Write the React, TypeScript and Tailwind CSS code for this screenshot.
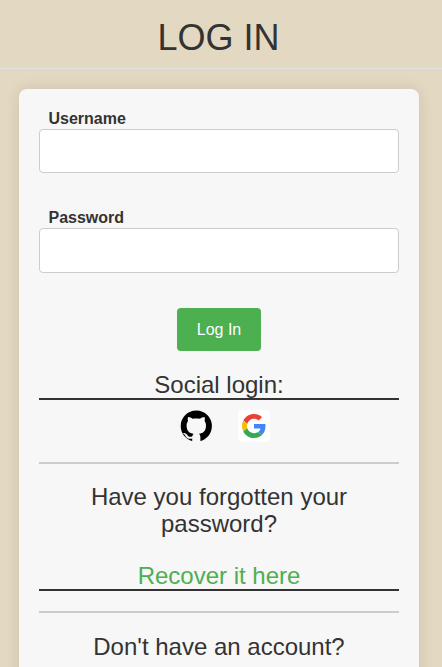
import React from "react";

function Field({ label, type, box }: { label: string; type: string; box: string }) {
  return (
    <label className="block">
      <span className="block h-[20px] pl-[9.5px] text-[16px] font-bold leading-[20px]">{label}</span>
      <input
        type={type}
        className={`block w-full rounded-[4px] border border-[#ccc] bg-white px-3 outline-none ${box}`}
      />
    </label>
  );
}

function GithubMark() {
  return (
    <svg viewBox="0 0 16 16" className="h-[32px] w-[32px]" aria-label="GitHub">
      <circle cx="8.15" cy="8" r="7.8" fill="#000" />
      <path
        fill="#f7f7f7"
        d="M6.1 16v-1.7c-1.6.3-2.6-.1-3.2-1.1-.3-.6-.7-.95-1.2-1.3-.2-.2 0-.4.3-.4.8 0 1.3.5 1.7 1.1.6.9 1.4.95 2.4.65.1-.6.35-1 .7-1.35-2.1-.3-3.5-1.4-3.5-4.2 0-.9.3-1.6.7-2.2-.2-.65-.15-1.35.05-1.95.85 0 1.6.4 2.25.85 1.2-.25 2.5-.25 3.7 0 .65-.45 1.4-.85 2.25-.85.2.6.25 1.3.05 1.95.4.6.7 1.3.7 2.2 0 2.8-1.4 3.9-3.5 4.2.45.4.7 1 .7 1.8V16z"
      />
    </svg>
  );
}

function GoogleMark() {
  return (
    <svg viewBox="0 0 48 48" className="h-[24px] w-[24px]" aria-label="Google">
      <path fill="#EA4335" d="M24 9.5c3.54 0 6.71 1.22 9.21 3.6l6.85-6.85C35.9 2.38 30.47 0 24 0 14.62 0 6.51 5.38 2.56 13.22l7.98 6.19C12.43 13.72 17.74 9.5 24 9.5z" />
      <path fill="#4285F4" d="M46.98 24.55c0-1.57-.15-3.09-.38-4.55H24v9.02h12.94c-.58 2.96-2.26 5.48-4.78 7.18l7.73 6c4.51-4.18 7.09-10.36 7.09-17.65z" />
      <path fill="#FBBC05" d="M10.53 28.59c-.48-1.45-.76-2.99-.76-4.59s.27-3.14.76-4.59l-7.98-6.19C.92 16.46 0 20.12 0 24c0 3.88.92 7.54 2.56 10.78l7.97-6.19z" />
      <path fill="#34A853" d="M24 48c6.48 0 11.93-2.13 15.89-5.81l-7.73-6c-2.15 1.45-4.92 2.3-8.16 2.3-6.26 0-11.57-4.22-13.47-9.91l-7.98 6.19C6.51 42.62 14.62 48 24 48z" />
    </svg>
  );
}

export default function App() {
  return (
    <div className="h-[667px] overflow-hidden bg-[#e3d8c1] font-['Liberation_Sans',Arial,sans-serif] text-[#333]">
      <h1 className="h-[68px] pr-[5px] pt-[18px] text-center text-[36px] leading-[40px]">LOG IN</h1>
      <div className="h-px bg-[#e1e1e3]" />
      <main className="ml-[19px] mt-[20px] h-[700px] w-[400px] rounded-[8px] bg-[#f7f7f7] px-5 pt-5 shadow-[0_0_15px_rgba(0,0,0,0.1)]">
        <form className="flex flex-col">
          <Field label="Username" type="text" box="h-[44px]" />
          <div className="mt-[35px]">
            <Field label="Password" type="password" box="h-[45px]" />
          </div>
          <button
            type="button"
            className="mt-[35px] h-[43px] w-[84px] self-center rounded-[4px] bg-[#4caf50] text-[16px] text-white"
          >
            Log In
          </button>
        </form>
        <h2 className="mt-[21px] h-[28px] border-b-2 border-[#333] text-center text-[24px] leading-[26px]">
          Social login:
        </h2>
        <div className="mt-[10px] flex h-[32px] justify-center gap-[14px]">
          <a className="flex w-[55px] justify-center bg-[repeating-conic-gradient(#f3f3f3_0_25%,#fafafa_0_50%)] bg-[length:2px_2px]">
            <GithubMark />
          </a>
          <a className="flex w-8 items-center justify-center rounded-[4px] bg-white">
            <GoogleMark />
          </a>
        </div>
        <hr className="mt-[20px] h-[2px] border-0 bg-[#ccc]" />
        <p className="mt-[19px] h-[54px] text-center text-[24px] leading-[27px]">
          Have you forgotten your
          <br />
          password?
        </p>
        <p className="mt-[26px] h-[28px] border-b-2 border-[#333] text-center text-[24px] leading-[26px] text-[#4caf50]">
          Recover it here
        </p>
        <hr className="mt-[20px] h-[2px] border-0 bg-[#ccc]" />
        <p className="mt-[21px] text-center text-[24px] leading-[26px]">Don't have an account?</p>
      </main>
    </div>
  );
}
